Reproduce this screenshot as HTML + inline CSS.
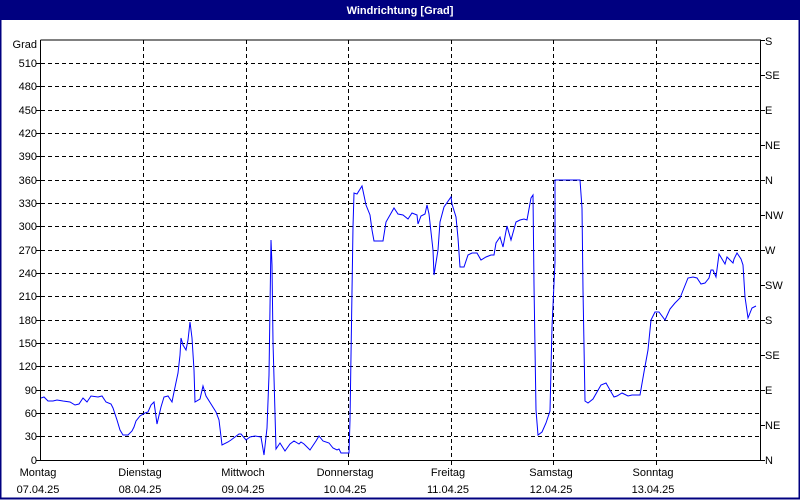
<!DOCTYPE html>
<html><head><meta charset="utf-8"><style>
html,body{margin:0;padding:0;background:#fff}
svg{display:block}
text{font-family:"Liberation Sans",Tahoma,sans-serif;font-size:11px;fill:#000}
</style></head><body>
<svg width="800" height="500" viewBox="0 0 800 500">
<rect x="0" y="0" width="800" height="500" fill="#fff"/>
<rect x="0.5" y="0.5" width="799" height="498" fill="none" stroke="#000080" stroke-width="2"/>
<rect x="0" y="0" width="800" height="20" fill="#000080"/>
<text x="400" y="14" text-anchor="middle" style="fill:#fff;font-weight:bold">Windrichtung [Grad]</text>
<g stroke="#000" stroke-width="1" stroke-dasharray="4,3" fill="none">
<path d="M41 63.5H760M41 86.5H760M41 110.5H760M41 133.5H760M41 156.5H760M41 180.5H760M41 203.5H760M41 226.5H760M41 250.5H760M41 273.5H760M41 296.5H760M41 320.5H760M41 343.5H760M41 366.5H760M41 390.5H760M41 413.5H760M41 436.5H760"/>
<path d="M143.5 40V460M246.5 40V460M348.5 40V460M451.5 40V460M553.5 40V460M656.5 40V460"/>
</g>
<g stroke="#000" stroke-width="1" fill="none">
<path d="M40.5 40V460.5H760.5V40H40.5"/>
<path d="M36 63.5H41M36 86.5H41M36 110.5H41M36 133.5H41M36 156.5H41M36 180.5H41M36 203.5H41M36 226.5H41M36 250.5H41M36 273.5H41M36 296.5H41M36 320.5H41M36 343.5H41M36 366.5H41M36 390.5H41M36 413.5H41M36 436.5H41M36 460.5H41"/>
<path d="M760 40.5H765M760 75.5H765M760 110.5H765M760 145.5H765M760 180.5H765M760 215.5H765M760 250.5H765M760 285.5H765M760 320.5H765M760 355.5H765M760 390.5H765M760 425.5H765M760 460.5H765"/>
<path d="M143.5 460V465M246.5 460V465M348.5 460V465M451.5 460V465M553.5 460V465M656.5 460V465"/>
</g>
<g text-anchor="end">
<text x="37" y="48">Grad</text>
<text x="37" y="67">510</text><text x="37" y="90">480</text><text x="37" y="114">450</text><text x="37" y="137">420</text><text x="37" y="160">390</text><text x="37" y="184">360</text><text x="37" y="207">330</text><text x="37" y="230">300</text><text x="37" y="254">270</text><text x="37" y="277">240</text><text x="37" y="300">210</text><text x="37" y="324">180</text><text x="37" y="347">150</text><text x="37" y="370">120</text><text x="37" y="394">90</text><text x="37" y="417">60</text><text x="37" y="440">30</text><text x="37" y="464">0</text>
</g>
<g>
<text x="765" y="45">S</text><text x="765" y="79">SE</text><text x="765" y="114">E</text><text x="765" y="149">NE</text><text x="765" y="184">N</text><text x="765" y="219">NW</text><text x="765" y="254">W</text><text x="765" y="289">SW</text><text x="765" y="324">S</text><text x="765" y="359">SE</text><text x="765" y="394">E</text><text x="765" y="429">NE</text><text x="765" y="464">N</text>
</g>
<g text-anchor="middle">
<text x="38" y="476">Montag</text><text x="38" y="493">07.04.25</text>
<text x="140" y="476">Dienstag</text><text x="140" y="493">08.04.25</text>
<text x="243" y="476">Mittwoch</text><text x="243" y="493">09.04.25</text>
<text x="345" y="476">Donnerstag</text><text x="345" y="493">10.04.25</text>
<text x="448" y="476">Freitag</text><text x="448" y="493">11.04.25</text>
<text x="551" y="476">Samstag</text><text x="551" y="493">12.04.25</text>
<text x="653" y="476">Sonntag</text><text x="653" y="493">13.04.25</text>
</g>
<polyline fill="none" stroke="#0000ff" stroke-width="1" points="41,398 44,397 48,401 53,401 57,400 63,401 70,402 75,405 79,404 83,398 87,402 91,396 98,397 102,396 106,402 111,404 113,408 117,420 120,430 123,435 128,435 132,431 134,427 136,421 140,416 145,413 148,412 151,405 154,402 157,424 161,407 164,397 168,396 172,402 174,392 178,373 180,355 181,338 183,345 186,350 188,340 190,322 192,338 194,370 195,402 200,399 203,386 206,396 211,404 216,412 219,420 222,445 228,442 231,440 239,434 241,434 246,440 250,437 255,436 261,437 264,455 267,428 269,375 271,240 272,265 273,342 276,449 280,443 285,451 290,444 294,441 299,444 301,442 304,444 310,450 316,441 319,436 323,441 329,443 333,448 337,450 339,449 341,453 349,453 350,420 351,356 353,227 354,193 357,194 362,186 366,205 370,215 372,230 374,241 383,241 386,222 394,208 398,214 403,215 408,219 412,213 417,215 418,224 421,216 425,214 427,205 429,214 433,250 434,275 438,250 440,222 444,207 451,197 452,204 456,217 458,238 460,267 464,267 468,255 472,253 477,253 481,260 486,257 491,255 494,255 496,243 500,237 503,247 507,226 511,240 516,222 520,220 524,219 527,220 531,198 533,195 534,285 536,410 538,435 542,432 546,423 550,411 552,327 555,262 555,180 580,180 582,208 583,290 585,401 588,403 593,399 601,385 606,383 614,397 617,396 622,393 628,396 632,395 640,395 644,372 648,350 651,320 655,312 659,312 665,320 670,309 675,303 680,298 688,278 693,277 697,278 701,284 705,283 709,278 711,270 713,270 716,277 719,254 722,259 725,264 727,257 730,260 733,263 734,259 737,253 741,259 743,265 745,297 748,318 752,308 756,306"/>
</svg>
</body></html>
